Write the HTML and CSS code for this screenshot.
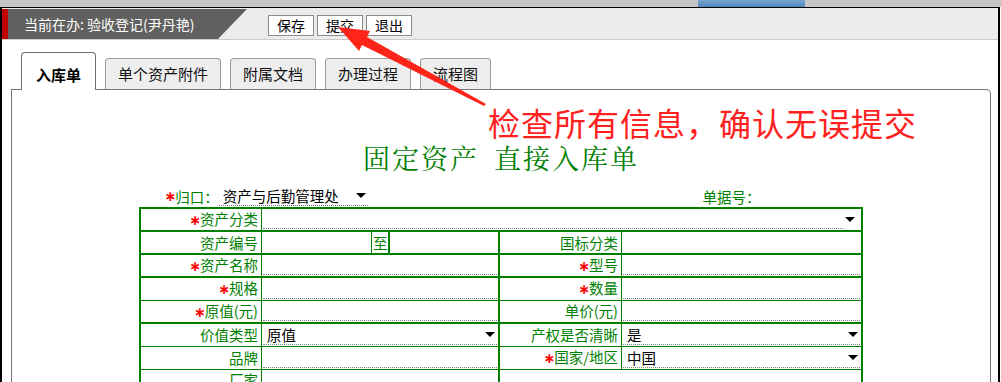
FILE: index.html
```html
<!DOCTYPE html>
<html lang="zh-CN">
<head>
<meta charset="utf-8">
<title>验收登记</title>
<link rel="stylesheet" href="styles.css">
</head>
<body>
<div class="topstrip"><div class="topstrip-tab"></div></div>
<div class="window">
  <div class="header">
    <div class="current"><span class="current-mark"></span><span class="current-text">当前在办: 验收登记(尹丹艳)</span></div>
    <div class="actions">
      <button class="btn">保存</button>
      <button class="btn">提交</button>
      <button class="btn">退出</button>
    </div>
  </div>
  <div class="tabs">
    <div class="tab active">入库单</div>
    <div class="tab">单个资产附件</div>
    <div class="tab">附属文档</div>
    <div class="tab">办理过程</div>
    <div class="tab">流程图</div>
  </div>
  <div class="panel">
    <h1 class="title">固定资产 直接入库单</h1>
    <div class="meta">
      <div class="meta-left"><span class="req">∗</span>归口：<span class="meta-select">资产与后勤管理处<i class="caret"></i></span></div>
      <div class="meta-right">单据号：</div>
    </div>
    <table class="form">
      <colgroup>
        <col class="c-lbl"><col class="c-va"><col class="c-zhi"><col class="c-vb"><col class="c-lbl2"><col class="c-val2">
      </colgroup>
      <tr>
        <td class="lbl"><span class="req">∗</span>资产分类</td>
        <td class="val" colspan="5"><div class="field field-short"><i class="caret caret-out"></i></div></td>
      </tr>
      <tr class="thick">
        <td class="lbl">资产编号</td>
        <td class="val"></td>
        <td class="zhi">至</td>
        <td class="val"></td>
        <td class="lbl lbl2">国标分类</td>
        <td class="val"></td>
      </tr>
      <tr class="thick">
        <td class="lbl"><span class="req">∗</span>资产名称</td>
        <td class="val" colspan="3"><div class="field"></div></td>
        <td class="lbl lbl2"><span class="req">∗</span>型号</td>
        <td class="val"><div class="field"></div></td>
      </tr>
      <tr class="thick">
        <td class="lbl"><span class="req">∗</span>规格</td>
        <td class="val" colspan="3"><div class="field"></div></td>
        <td class="lbl lbl2"><span class="req">∗</span>数量</td>
        <td class="val"><div class="field"></div></td>
      </tr>
      <tr>
        <td class="lbl"><span class="req">∗</span>原值(元)</td>
        <td class="val" colspan="3"><div class="field"></div></td>
        <td class="lbl lbl2">单价(元)</td>
        <td class="val"><div class="field"></div></td>
      </tr>
      <tr class="thick">
        <td class="lbl">价值类型</td>
        <td class="val" colspan="3"><div class="field">原值<i class="caret"></i></div></td>
        <td class="lbl lbl2">产权是否清晰</td>
        <td class="val"><div class="field">是<i class="caret"></i></div></td>
      </tr>
      <tr>
        <td class="lbl">品牌</td>
        <td class="val" colspan="3"><div class="field"></div></td>
        <td class="lbl lbl2"><span class="req">∗</span>国家/地区</td>
        <td class="val"><div class="field">中国<i class="caret"></i></div></td>
      </tr>
      <tr>
        <td class="lbl">厂家</td>
        <td class="val" colspan="3"><div class="field"></div></td>
        <td class="val blank lbl2" colspan="2"></td>
      </tr>
    </table>
  </div>
</div>
<div class="note">检查所有信息，确认无误提交</div>
<svg class="arrow" width="1001" height="382" viewBox="0 0 1001 382">
  <polygon points="338,27 370,31 367,37 486,104 484,106 362,45 359,51" fill="#ff2418"/>
</svg>
</body>
</html>
```
FILE: styles.css
```css
html, body {
  margin: 0;
  padding: 0;
  height: 382px;
  overflow: hidden;
  background: #fff;
}
body {
  position: relative;
  font-family: "Noto Sans CJK SC", "Noto Sans", sans-serif;
  font-size: 14px;
  color: #000;
}
.topstrip {
  height: 7px;
  background: #c7c7c7;
  display: flex;
}
.topstrip-tab {
  margin-left: 698px;
  width: 107px;
  background: linear-gradient(#77a5d0, #4f87bc);
}
.window {
  box-sizing: border-box;
  width: 1000px;
  height: 375px;
  border: 2px solid #000;
  border-top-width: 1px;
  border-bottom: none;
}
.header {
  height: 31px;
  background: #ececec;
  border-bottom: 1px solid #cbcbcb;
  display: flex;
  align-items: flex-start;
}
.current {
  margin-top: 1px;
  height: 30px;
  width: 245px;
  display: flex;
  background: #606060;
  clip-path: polygon(0 0, 100% 0, calc(100% - 29px) 100%, 0 100%);
}
.current-mark {
  width: 6px;
  background: #c00000;
}
.current-text {
  color: #fff;
  line-height: 30px;
  padding-left: 16px;
  font-size: 14px;
  white-space: nowrap;
}
.actions {
  display: flex;
  gap: 3px;
  margin-left: 21px;
  margin-top: 7px;
}
.btn {
  box-sizing: border-box;
  width: 46px;
  height: 21px;
  padding: 0;
  border: 1px solid #8c8c8c;
  background: #fff;
  font-family: inherit;
  font-size: 14px;
  line-height: 19px;
  color: #000;
}
.tabs {
  height: 49px;
  display: flex;
  align-items: flex-end;
  padding-left: 19px;
  gap: 9px;
  position: relative;
  z-index: 1;
}
.tab {
  box-sizing: border-box;
  height: 31px;
  padding: 0 12px;
  border: 1px solid #9a9a9a;
  border-bottom: none;
  border-radius: 4px 4px 0 0;
  background: #eeeeee;
  font-size: 15px;
  line-height: 30px;
  color: #111;
  white-space: nowrap;
}
.tab.active {
  height: 38px;
  margin-bottom: -1px;
  padding: 7px 14px 0;
  background: #fff;
  border-color: #6e6e6e;
  font-weight: bold;
  color: #000;
}
.panel {
  box-sizing: border-box;
  margin-left: 9px;
  width: 980px;
  height: 300px;
  border: 1px solid #777;
  border-bottom: none;
  border-top-right-radius: 5px;
}
.title {
  margin: 50px 0 0;
  text-align: center;
  font-family: "Noto Serif CJK SC", "Liberation Serif", "Noto Sans CJK SC", serif;
  font-weight: normal;
  font-size: 27px;
  line-height: 36px;
  letter-spacing: 2px;
  word-spacing: 6px;
  color: #008000;
}
.meta {
  box-sizing: border-box;
  width: 721px;
  height: 20px;
  margin: 10px auto 0;
  padding-left: 24px;
  display: flex;
  align-items: center;
  color: #008000;
  font-size: 14.5px;
}
.meta-left {
  width: 538px;
  display: flex;
  align-items: center;
  white-space: nowrap;
}
.meta-select {
  box-sizing: border-box;
  width: 149px;
  height: 20px;
  margin-left: 0;
  padding-left: 4px;
  display: flex;
  align-items: center;
  border-bottom: 1px dotted #777;
  color: #000;
}
.meta-right {
  white-space: nowrap;
}
.req {
  color: #ff0000;
  font-family: "DejaVu Sans", sans-serif;
  font-size: 14px;
  font-weight: bold;
  margin-right: -1px;
}
.caret {
  display: block;
  width: 0;
  height: 0;
  margin-left: auto;
  margin-right: 2px;
  border-left: 5px solid transparent;
  border-right: 5px solid transparent;
  border-top: 5px solid #000;
}
.form {
  border-collapse: collapse;
  table-layout: fixed;
  width: 721px;
  margin: 1px auto 0;
  border: 2px solid #008000;
  font-size: 14.5px;
}
.c-lbl { width: 121px; }
.c-va { width: 110px; }
.c-zhi { width: 18px; }
.c-vb { width: 110px; }
.c-lbl2 { width: 122px; }
.c-val2 { width: 240px; }
.form tr {
  height: 23px;
}
.form td {
  border: 1px solid #008000;
  padding: 0;
  line-height: 20px;
}
.form tr.thick td {
  border-top-width: 2px;
}
.form td.lbl {
  text-align: right;
  padding-right: 3px;
  vertical-align: middle;
  white-space: nowrap;
  color: #008000;
}
.form td.lbl2 {
  border-left-width: 2px;
}
.form td.zhi {
  text-align: center;
  color: #008000;
  border-right-width: 2px;
}
.form td.val {
  vertical-align: bottom;
  padding: 0 1px;
}
.field {
  box-sizing: border-box;
  height: 19px;
  margin-bottom: 1px;
  padding-left: 4px;
  display: flex;
  align-items: center;
  border-bottom: 1px dotted #808080;
  color: #000;
  position: relative;
}
.field-short {
  margin-right: 17px;
}
.caret-out {
  position: absolute;
  right: -14px;
  top: 7px;
}
.note {
  position: absolute;
  left: 488px;
  top: 106px;
  font-size: 32px;
  line-height: 32px;
  letter-spacing: 1px;
  color: #ff2020;
  white-space: nowrap;
  z-index: 4;
}
.arrow {
  position: absolute;
  left: 0;
  top: 0;
  z-index: 5;
  pointer-events: none;
}
```
